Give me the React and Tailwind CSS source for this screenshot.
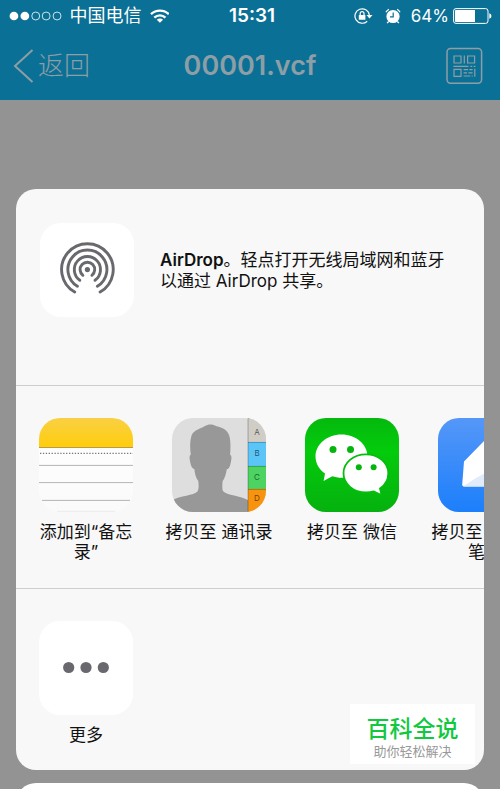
import clsx from 'clsx';

/**
 * @file Share sheet shown over a contact card file
 */

function StatusBar() {
  return (
    <div className="grid h-8 grid-cols-3 items-center px-2 text-lg leading-8 text-white">
      <div className="flex items-center gap-2 whitespace-nowrap">
        <svg width="54" height="10" viewBox="0 0 54 10" fill="none" stroke="currentColor" aria-label="Signal" role="img">
          <circle cx="6" cy="5" r="4.4" fill="currentColor" stroke="none" />
          <circle cx="17" cy="5" r="4.4" fill="currentColor" stroke="none" />
          <circle cx="28" cy="5" r="4" strokeWidth="0.8" />
          <circle cx="38.5" cy="5" r="4" strokeWidth="0.8" />
          <circle cx="49.5" cy="5" r="4" strokeWidth="0.8" />
        </svg>
        <span>中国电信</span>
        <svg width="20" height="14" viewBox="0 0 20 14" fill="none" stroke="currentColor" strokeWidth="2.4" aria-label="Wi-Fi" role="img">
          <path d="M1 5.2C6 .3 14 .3 19 5.2" />
          <path d="M4.4 8.6c3.2-3 8-3 11.2 0" />
          <path d="M10 13.8 6.8 10.7c1.8-1.7 4.6-1.7 6.4 0z" fill="currentColor" stroke="none" />
        </svg>
      </div>
      <div className="pl-1 text-center text-[19px] font-semibold">15:31</div>
      <div className="flex items-center justify-end gap-1 whitespace-nowrap text-[17px]">
        <svg className="mr-2" width="19" height="16" viewBox="0 0 19 16" fill="none" stroke="currentColor" strokeWidth="1.2" aria-label="Rotation lock" role="img">
          <path d="M13.2 13.2A7.2 7.2 0 1 1 15.3 7" />
          <path d="M12.5 7h6l-3 3.6z" fill="currentColor" stroke="none" />
          <rect x="4.8" y="7" width="6.6" height="4.8" rx=".5" fill="currentColor" stroke="none" />
          <path d="M6.2 7V5.6a1.9 1.9 0 0 1 3.8 0V7" />
        </svg>
        <svg className="mr-1.5" width="16" height="16" viewBox="0 0 16 16" fill="none" aria-label="Alarm" role="img">
          <circle cx="8" cy="8.5" r="6.6" fill="currentColor" />
          <path d="M.9 4.2a8 8 0 0 1 3-3M15.1 4.2a8 8 0 0 0-3-3M3.6 13.5l-1.5 1.6M12.4 13.5l1.5 1.6" stroke="currentColor" strokeWidth="1.3" />
          <path d="M8.2 4.6v4.2H5" stroke="#0b7095" strokeWidth="1.2" />
        </svg>
        <span>64%</span>
        <svg width="39" height="16" viewBox="0 0 39 16" fill="none" aria-label="Battery" role="img">
          <rect x=".6" y=".6" width="34.4" height="14.8" rx="2.4" stroke="currentColor" strokeWidth="1" />
          <path d="M2.8 2h19.2v12H2.8A1 1 0 0 1 2 13V3a1 1 0 0 1 .8-1z" fill="currentColor" />
          <path d="M36.3 5.2c2.8.8 2.8 4.8 0 5.6z" fill="currentColor" />
        </svg>
      </div>
    </div>
  );
}

function NavBar() {
  return (
    <div className="grid h-[68px] grid-cols-[1fr_auto_1fr] items-center px-3 text-[#8d9ea6]">
      <button type="button" className="flex items-center gap-1 text-[26px] font-light leading-9">
        <svg width="22" height="36" viewBox="0 0 22 36" fill="none" stroke="currentColor" strokeWidth="2">
          <path d="M20.5 2 3 18l17.5 16" />
        </svg>
        返回
      </button>
      <h1 className="text-[27px] font-semibold leading-9">00001.vcf</h1>
      <button type="button" aria-label="QR code" className="justify-self-end pr-[5px]">
        <svg width="38" height="38" viewBox="0 0 38 38" fill="none" stroke="currentColor" strokeWidth="1.2">
          <rect x="2" y="1.6" width="34.6" height="34.6" rx="3.6" strokeWidth="1.5" />
          <path d="M9 9h7v7H9zM22.6 9h7v7h-7zM9 22.4h7v7H9z" />
          <path d="M19.3 8.4v8.2M8.4 19.3h15M25.4 19.3h1.8M28.6 19.3h1.8M18.6 22.6h4.6M24.4 22.6h3.2M18.6 25.8h3.4M23.4 25.8h4.2M18.6 29h6.8M26.6 29h1.2M29.8 21.8v8" />
        </svg>
      </button>
    </div>
  );
}

function AirDropIcon() {
  return (
    <svg width="94" height="94" viewBox="0 0 94 94" fill="none" stroke="#68696e" strokeWidth="2.9" strokeLinecap="round">
      <circle cx="47.4" cy="46.6" r="2.6" fill="#68696e" stroke="none" />
      <path d="M42.9 52.3a7.3 7.3 0 1 1 9 0" />
      <path d="M39.8 57.3a13.1 13.1 0 1 1 15.2 0" />
      <path d="M37.4 63.3a19.5 19.5 0 1 1 20 0" />
      <path d="M34.7 69a25.8 25.8 0 1 1 25.4 0" />
    </svg>
  );
}

function NotesIcon() {
  return (
    <svg width="94" height="94" viewBox="0 0 94 94">
      <defs>
        <linearGradient id="notes-top" x1="0" y1="0" x2="0" y2="1">
          <stop offset="0" stopColor="#f9d044" />
          <stop offset="1" stopColor="#ffcd0c" />
        </linearGradient>
        <linearGradient id="notes-paper" x1="0" y1="0" x2="0" y2="1">
          <stop offset="0" stopColor="#fff" />
          <stop offset="1" stopColor="#fafafa" />
        </linearGradient>
      </defs>
      <rect width="94" height="94" rx="21" fill="url(#notes-paper)" />
      <path d="M0 29V21A21 21 0 0 1 21 0h52a21 21 0 0 1 21 21v8z" fill="url(#notes-top)" />
      <path d="M0 29.5h94" stroke="#b99b45" />
      <path d="M1 35.3h93" stroke="#777" strokeWidth="1.3" strokeDasharray="1.3 1.6" />
      <path d="M0 47.4h94M0 64.6h94M3 82.4h88" stroke="#b5b5b7" />
      <path d="M18 93.3h58" stroke="#ececec" />
    </svg>
  );
}

const CONTACT_TABS = [
  { letter: 'A', y: 0, height: 24, color: '#d0cdc7', textY: 17 },
  { letter: 'B', y: 24, height: 24, color: '#5bc5f7', textY: 38 },
  { letter: 'C', y: 48, height: 23, color: '#4cd362', textY: 62 },
  { letter: 'D', y: 71, height: 23, color: '#f8930f', textY: 83 },
];

function ContactsIcon() {
  return (
    <svg width="94" height="94" viewBox="0 0 94 94">
      <clipPath id="contacts-clip">
        <rect width="94" height="94" rx="21" />
      </clipPath>
      <g clipPath="url(#contacts-clip)">
        <rect width="94" height="94" fill="#dedede" />
        <path
          d="M0 82.500C8 77.500 22 77.500 25.500 73.500c1.500-3 1.200-6 .8-10.500-2.200-2.500-3.400-7-4-12-2.600-.5-3.600-4-4.500-9-.5-3-.2-5 1-5.300-1-7-1-14 1-20 2.800-5 8.200-5.700 12.700-8.500 4-2.300 8-2.300 12 0 6 1.500 11 3.500 12.800 9.500 1.500 6 1.300 12 .8 19 1.500.5 1.600 3 1 6-.8 5-1.800 8-4.300 8.500-.8 5-2 9-4.200 12-.4 4-.5 8 .5 10 3.200 4 18 4.500 25 9V94H0z"
          fill="#989898"
        />
        {CONTACT_TABS.map((tab) => (
          <g key={tab.letter}>
            <rect x="76" y={tab.y} width="18" height={tab.height} fill={tab.color} />
            <path d={`M76 ${tab.y + 0.4}h18`} stroke="#000" strokeOpacity=".3" strokeWidth=".8" />
            <text x="85" y={tab.textY} textAnchor="middle" fontSize="8" fill="#000" fillOpacity=".6">
              {tab.letter}
            </text>
          </g>
        ))}
        <path d="M76 0v94" stroke="#000" strokeOpacity=".25" />
      </g>
    </svg>
  );
}

function WeChatIcon() {
  return (
    <svg width="94" height="94" viewBox="0 0 94 94">
      <defs>
        <linearGradient id="wechat-bg" x1="0" y1="0" x2="0" y2="1">
          <stop offset="0" stopColor="#04b90d" />
          <stop offset=".35" stopColor="#04cb0c" />
          <stop offset="1" stopColor="#05b10e" />
        </linearGradient>
      </defs>
      <rect width="94" height="94" rx="21" fill="url(#wechat-bg)" />
      <path d="M36.500 16.500C22 16.500 10.500 26.300 10.500 38.500c0 7 3.800 13 9.500 17L18.600 63l8.600-4.700c3 .9 6.200 1.500 9.300 1.500 14.500 0 26-9.200 26-21.300S51 16.500 36.500 16.500z" fill="#fff" />
      <path d="M61 36.300c-12.800 0-22.500 8.500-22.500 19s9.700 19.200 22.500 19.200c2.800 0 5.400-.4 7.800-1.100l7.900 4-1.700-6.800c5.100-3.500 8.300-9 8.300-15.300 0-10.500-9.700-19-22.300-19z" fill="#fff" stroke="#05bd0d" strokeWidth="1.800" />
      <g fill="#05b40d">
        <circle cx="28" cy="31.600" r="3.500" />
        <circle cx="45.500" cy="31.600" r="3.500" />
        <circle cx="53.800" cy="49.300" r="3" />
        <circle cx="68.600" cy="49.300" r="3" />
      </g>
    </svg>
  );
}

function NoteCloudIcon() {
  return (
    <svg width="94" height="94" viewBox="0 0 94 94">
      <defs>
        <linearGradient id="cloud-bg" x1="0" y1="0" x2="0" y2="1">
          <stop offset="0" stopColor="#5597f8" />
          <stop offset="1" stopColor="#1c7ffb" />
        </linearGradient>
      </defs>
      <rect width="94" height="94" rx="21" fill="url(#cloud-bg)" />
      <path d="M26 43.500 52 17l20 22v29.500H26q-2 0-1.800-2z" fill="#fff" />
      <path d="M25 68.500 38 60l12-6.500v15z" fill="#e0ebfc" />
    </svg>
  );
}

function MoreIcon() {
  return (
    <svg width="94" height="94" viewBox="0 0 94 94" fill="#68686e">
      <circle cx="29.700" cy="46.500" r="5.600" />
      <circle cx="47" cy="46.500" r="5.600" />
      <circle cx="64.300" cy="46.500" r="5.600" />
    </svg>
  );
}

const APPS = [
  { label: '添加到“备忘录”', icon: NotesIcon },
  { label: '拷贝至 通讯录', icon: ContactsIcon },
  { label: '拷贝至 微信', icon: WeChatIcon },
  { label: '拷贝至 有道云笔记', icon: NoteCloudIcon },
];

function ShareItem({ label, icon: Icon, tile }) {
  return (
    <button type="button" className="flex w-28 shrink-0 flex-col items-center gap-[10px]">
      <span className={clsx('rounded-[21px]', tile && 'bg-white')}>
        <Icon />
      </span>
      <span className="text-center text-[17px] leading-5">{label}</span>
    </button>
  );
}

function ShareSheet() {
  return (
    <section aria-label="Share" className="relative overflow-hidden rounded-[20px] bg-[#f8f8f8] text-[#111]">
      <div className="flex h-[196px] items-start gap-[26px] pl-6 pr-8 pt-[34px]">
        <span className="shrink-0 rounded-[21px] bg-white">
          <AirDropIcon />
        </span>
        <p className="pt-[27px] text-[17px] leading-[21px]">
          <strong className="font-semibold">AirDrop</strong>。轻点打开无线局域网和蓝牙以通过 AirDrop 共享。
        </p>
      </div>
      <div className="flex h-[203px] items-start gap-[21px] overflow-hidden border-t border-[#cdcdd2] pl-[14px] pt-8">
        {APPS.map((app) => (
          <ShareItem key={app.label} label={app.label} icon={app.icon} />
        ))}
      </div>
      <div className="flex h-[182px] items-start border-t border-[#cdcdd2] pl-[14px] pt-8">
        <ShareItem label="更多" icon={MoreIcon} tile />
      </div>

      {/* Site badge laid over the corner of the sheet */}
      <div className="absolute bottom-[6px] right-[9px] flex h-[60px] w-[125px] flex-col items-center bg-white pt-[13px]">
        <span className="text-[23px] font-medium leading-6 text-[#12c840]">百科全说</span>
        <span className="text-[13px] leading-5 text-[#999]">助你轻松解决</span>
      </div>
    </section>
  );
}

export default function App() {
  return (
    <div className="flex h-screen flex-col overflow-hidden bg-[#939393] font-['Inter','Noto_Sans_CJK_SC',sans-serif]" lang="zh-CN">
      <header className="shrink-0 bg-[#0b7095]">
        <StatusBar />
        <NavBar />
      </header>
      <main className="flex shrink-0 flex-col gap-[13px] px-4 pt-[89px]">
        <ShareSheet />
        <button type="button" aria-label="Cancel" className="h-16 rounded-[20px] bg-white" />
      </main>
    </div>
  );
}
